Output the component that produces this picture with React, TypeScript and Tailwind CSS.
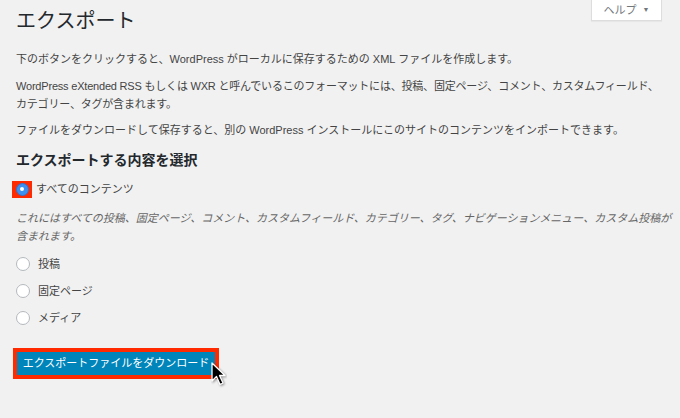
import React from 'react';

const font = { fontFamily: '"Liberation Sans", "Noto Sans CJK JP", sans-serif' };

function Radio({ checked, label }: { checked?: boolean; label: string }) {
  return <label className="flex items-center h-[20px] text-[11px] text-[#444]">
      {checked ? <span className="ml-[-4px] mr-[4px] flex items-center justify-center w-[20px] h-[17px] bg-[#ff2a00]">
          <span className="flex items-center justify-center w-[13px] h-[13px] rounded-full bg-[#3d8ff0] border border-[#2a78d8]">
            <span className="w-[4px] h-[4px] rounded-full bg-white" />
          </span>
        </span> : <span className="mr-[8px] w-[14px] h-[14px] rounded-full bg-white border border-[#b4b9be]" />}
      <span>{label}</span>
    </label>;
}

export default function App() {
  return <div className="relative w-[680px] h-[418px] bg-[#f1f1f1] overflow-hidden" style={font}>
      {/* Help tab */}
      <div className="absolute right-[18px] top-0 w-[71px] h-[21px] bg-white border border-t-0 border-[#ddd] shadow-[0_1px_1px_rgba(0,0,0,0.04)] flex items-center justify-center gap-[6px] text-[11px] text-[#72777c]">
        <span>ヘルプ</span>
        <span className="text-[7px]">▼</span>
      </div>

      <div className="pl-4 pr-2 pt-[7px]">
        <h1 className="text-[20px] leading-[28px] text-[#23282d]">エクスポート</h1>
        <p className="mt-[15px] text-[11px] leading-[18px] text-[#444]">
          下のボタンをクリックすると、WordPress がローカルに保存するための XML ファイルを作成します。
        </p>
        <p className="mt-[9px] text-[11px] leading-[18px] tracking-[-0.2px] text-[#444]">
          WordPress eXtended RSS もしくは WXR と呼んでいるこのフォーマットには、投稿、固定ページ、コメント、カスタムフィールド、<br />
          カテゴリー、タグが含まれます。
        </p>
        <p className="mt-[8px] text-[11px] leading-[18px] text-[#444]">
          ファイルをダウンロードして保存すると、別の WordPress インストールにこのサイトのコンテンツをインポートできます。
        </p>

        <h2 className="mt-[11px] text-[14px] leading-[20px] font-bold text-[#23282d]">エクスポートする内容を選択</h2>

        <div className="mt-[9px]">
          <Radio checked label="すべてのコンテンツ" />
        </div>
        <p className="mt-[10px] text-[11px] leading-[18px] italic text-[#666]">
          これにはすべての投稿、固定ページ、コメント、カスタムフィールド、カテゴリー、タグ、ナビゲーションメニュー、カスタム投稿が含まれます。
        </p>

        <div className="mt-[9px] flex flex-col gap-[7px]">
          <Radio label="投稿" />
          <Radio label="固定ページ" />
          <Radio label="メディア" />
        </div>

        <div className="mt-[20px] ml-[-3px] inline-flex border-[4px] border-[#ff2a00]">
          <button className="relative w-[198px] h-[23px] bg-[#0085ba] text-white text-[11px] flex items-center justify-center">
            エクスポートファイルをダウンロード
            {/* cursor */}
            <svg className="absolute left-[194px] top-[10px]" width="16" height="26" viewBox="0 0 16 26">
              <path d="M1 1 L1 19 L5.5 14.5 L9 22.5 L12 21 L8.5 13.5 L14 13.5 Z" fill="#000" stroke="#fff" strokeWidth="1.3" strokeLinejoin="round" style={{ filter: 'drop-shadow(1px 1px 1px rgba(0,0,0,0.4))' }} />
            </svg>
          </button>
        </div>
      </div>
    </div>;
}
